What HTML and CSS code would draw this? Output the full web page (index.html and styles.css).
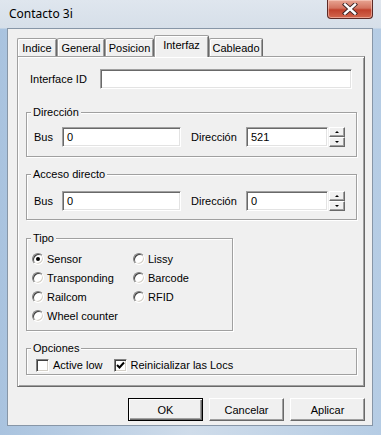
FILE: index.html
```html
<!DOCTYPE html>
<html lang="es">
<head>
  <meta charset="UTF-8">
  <title>Contacto 3i</title>
  <link rel="stylesheet" href="styles.css">
</head>
<body>
  <div class="window">
    <div class="titlebar">
      <span class="title">Contacto 3i</span>
      <div class="close">
        <svg width="16" height="12" viewBox="0 0 16 12">
          <path d="M3 1.5 L13 10.5 M13 1.5 L3 10.5" stroke="#3a2222" stroke-width="4.2" stroke-linecap="square"/>
          <path d="M3 1.5 L13 10.5 M13 1.5 L3 10.5" stroke="#ffffff" stroke-width="2.4" stroke-linecap="square"/>
        </svg>
      </div>
    </div>

    <div class="client">
      <div class="tabs">
        <div class="tab w-indice">Indice</div>
        <div class="tab w-general">General</div>
        <div class="tab w-posicion">Posicion</div>
        <div class="tab active w-interfaz">Interfaz</div>
        <div class="tab w-cableado">Cableado</div>
      </div>

      <div class="page">
        <div class="id-row">
          <span class="id-label">Interface ID</span>
          <div class="field id-field"></div>
        </div>

        <!-- Direccion -->
        <fieldset class="group g-dir">
          <legend>Dirección</legend>
          <div class="addr-row">
            <span class="lbl-bus">Bus</span>
            <div class="field bus-field">0</div>
            <span class="lbl-dir">Dirección</span>
            <div class="field dir-field">521</div>
            <div class="spin">
              <div class="spin-btn"><span class="arr up"></span></div>
              <div class="spin-btn"><span class="arr down"></span></div>
            </div>
          </div>
        </fieldset>

        <!-- Acceso directo -->
        <fieldset class="group g-acc">
          <legend>Acceso directo</legend>
          <div class="addr-row">
            <span class="lbl-bus">Bus</span>
            <div class="field bus-field">0</div>
            <span class="lbl-dir">Dirección</span>
            <div class="field dir-field">0</div>
            <div class="spin">
              <div class="spin-btn"><span class="arr up"></span></div>
              <div class="spin-btn"><span class="arr down"></span></div>
            </div>
          </div>
        </fieldset>

        <!-- Tipo -->
        <fieldset class="group g-tipo">
          <legend>Tipo</legend>
          <div class="radios">
            <div class="radio"><span class="dot checked"></span>Sensor</div>
            <div class="radio"><span class="dot"></span>Lissy</div>
            <div class="radio"><span class="dot"></span>Transponding</div>
            <div class="radio"><span class="dot"></span>Barcode</div>
            <div class="radio"><span class="dot"></span>Railcom</div>
            <div class="radio"><span class="dot"></span>RFID</div>
            <div class="radio"><span class="dot"></span>Wheel counter</div>
          </div>
        </fieldset>

        <!-- Opciones -->
        <fieldset class="group g-opc">
          <legend>Opciones</legend>
          <div class="checks">
            <div class="check"><span class="box"></span>Active low</div>
            <div class="check"><span class="box">
              <svg width="9" height="9" viewBox="0 0 9 9"><path d="M1 4 L3.5 6.5 L8 1.5" fill="none" stroke="#000" stroke-width="2"/></svg>
            </span>Reinicializar las Locs</div>
          </div>
        </fieldset>
      </div>

      <div class="buttons">
        <div class="btn default">OK</div>
        <div class="btn">Cancelar</div>
        <div class="btn">Aplicar</div>
      </div>
    </div>
  </div>
</body>
</html>
```

FILE: styles.css
```css
/* Reset */
* {
  margin: 0;
  padding: 0;
  box-sizing: border-box;
}

body {
  width: 381px;
  height: 435px;
  overflow: hidden;
  font-family: "Liberation Sans", Arial, sans-serif;
  font-size: 11px;
  color: #000;
  background: linear-gradient(90deg, #a9c3df 0%, #cfdcea 50%, #b5cce4 100%);
}

/* Cornice della finestra */
.window {
  height: 435px;
  padding: 0 8px 0 7px;
  background: linear-gradient(180deg, #dfe6ee 0px, #d6dfe9 28px, transparent 29px);
}

.titlebar {
  height: 28px;
  display: flex;
  align-items: flex-start;
}

.title {
  font-family: "Noto Sans", "Open Sans", sans-serif;
  font-size: 12px;
  padding: 5px 0 0 2px;
  color: #000;
}

.close {
  margin-left: auto;
  width: 46px;
  height: 19px;
  border: 1px solid #5b2a26;
  border-top: none;
  border-radius: 0 0 4px 4px;
  background: linear-gradient(180deg, #e8a593 0%, #d3735f 45%, #c0412c 55%, #d2684f 100%);
  box-shadow: inset 0 0 0 1px rgba(255, 220, 210, 0.5);
  display: flex;
  align-items: center;
  justify-content: center;
}

/* Area client */
.client {
  width: 366px;
  height: 398px;
  border: 1px solid #8796a7;
  background: #f0f0f0;
  padding-top: 6px;
}

/* Linguette */
.tabs {
  display: flex;
  align-items: flex-end;
  height: 21px;
  padding-left: 9px;
  position: relative;
  z-index: 1;
}

.tab {
  height: 18px;
  display: flex;
  align-items: center;
  justify-content: center;
  padding-top: 1px;
  background: #f0f0f0;
  border-top: 1px solid #a0a0a0;
  border-left: 1px solid #a0a0a0;
  border-right: 1px solid #696969;
  border-radius: 2px 2px 0 0;
  box-shadow: inset 1px 1px #fff, inset -1px 0 #a0a0a0;
}

.tab.active {
  height: 22px;
  margin-bottom: -1px;
  padding-top: 0;
  padding-bottom: 3px;
}

.w-indice { width: 40px; }
.w-general { width: 48px; }
.w-posicion { width: 49px; }
.w-interfaz { width: 55px; }
.w-cableado { width: 54px; }

/* Pagina */
.page {
  margin-left: 9px;
  width: 348px;
  height: 331px;
  border: 1px solid;
  border-color: #a0a0a0 #696969 #696969 #a0a0a0;
  box-shadow: inset 1px 1px #fff, inset -1px -1px #a0a0a0;
  padding-top: 12px;
}

.id-row {
  display: flex;
  align-items: center;
  height: 20px;
}

.id-label {
  width: 82px;
  padding-left: 12px;
}

/* Campi di testo */
.field {
  height: 20px;
  background: #fff;
  border: 1px solid;
  border-color: #a0a0a0 #fff #fff #a0a0a0;
  box-shadow: inset 1px 1px #696969, inset -1px -1px #e3e3e3;
  padding: 3px 0 0 4px;
  line-height: 13px;
}

.id-field { width: 252px; }

/* Riquadri */
.group {
  margin-left: 8px;
  width: 331px;
  border: 1px solid #a0a0a0;
  box-shadow: inset 1px 1px #fff, 1px 1px #fff;
  min-inline-size: 0;
}

.group legend {
  margin-left: 4px;
  padding: 0 2px;
  line-height: 13px;
  background: #f0f0f0;
}

.g-dir {
  margin-top: 17px;
  height: 51px;
  padding-top: 8px;
}

.g-acc {
  margin-top: 11px;
  height: 52px;
  padding-top: 10px;
}

.g-tipo {
  margin-top: 12px;
  width: 207px;
  height: 99px;
  padding-top: 4px;
}

.g-opc {
  margin-top: 11px;
  height: 33px;
  padding-top: 3px;
}

.addr-row {
  display: flex;
  align-items: center;
  padding-left: 7px;
}

.lbl-bus { width: 28px; }
.bus-field { width: 119px; }
.lbl-dir { width: 55px; margin-left: 10px; }
.dir-field { width: 82px; }

/* Spin */
.spin {
  margin-left: 1px;
  width: 16px;
  display: flex;
  flex-direction: column;
}

.spin-btn {
  height: 10px;
  background: #f0f0f0;
  border: 1px solid;
  border-color: #fff #696969 #696969 #fff;
  box-shadow: inset -1px -1px #a0a0a0;
  display: flex;
  align-items: center;
  justify-content: center;
}

.arr {
  width: 0;
  height: 0;
  border-left: 2px solid transparent;
  border-right: 2px solid transparent;
}

.arr.up { border-bottom: 2px solid #000; }
.arr.down { border-top: 2px solid #000; }

/* Radio */
.radios {
  display: grid;
  grid-template-columns: 101px 90px;
  grid-auto-rows: 19px;
  padding-left: 5px;
}

.radio {
  display: flex;
  align-items: center;
}

.dot {
  width: 12px;
  height: 12px;
  border-radius: 50%;
  border: 1px solid;
  border-color: #808080 #fff #fff #808080;
  background: #fff;
  box-shadow: inset 1px 1px #404040, inset -1px -1px #d4d0c8;
  margin-right: 3px;
  display: flex;
  align-items: center;
  justify-content: center;
}

.dot.checked::after {
  content: "";
  width: 4px;
  height: 4px;
  border-radius: 50%;
  background: #000;
}

/* Checkbox */
.checks {
  display: flex;
  align-items: center;
  height: 14px;
  padding-left: 9px;
}

.check {
  display: flex;
  align-items: center;
  margin-right: 11px;
}

.box {
  width: 13px;
  height: 13px;
  background: #fff;
  border: 1px solid;
  border-color: #808080 #fff #fff #808080;
  box-shadow: inset 1px 1px #404040, inset -1px -1px #d4d0c8;
  margin-right: 4px;
  display: flex;
  align-items: center;
  justify-content: center;
}

/* Pulsanti */
.buttons {
  display: flex;
  justify-content: flex-end;
  gap: 6px;
  margin-top: 11px;
  padding-right: 7px;
}

.btn {
  width: 75px;
  height: 23px;
  display: flex;
  align-items: center;
  justify-content: center;
  background: #f0f0f0;
  border: 1px solid;
  border-color: #fff #696969 #696969 #fff;
  box-shadow: inset -1px -1px #a0a0a0;
}

.btn.default {
  border: 1px solid #000;
  box-shadow: inset 1px 1px #fff, inset -1px -1px #696969, inset -2px -2px #a0a0a0;
}
```
